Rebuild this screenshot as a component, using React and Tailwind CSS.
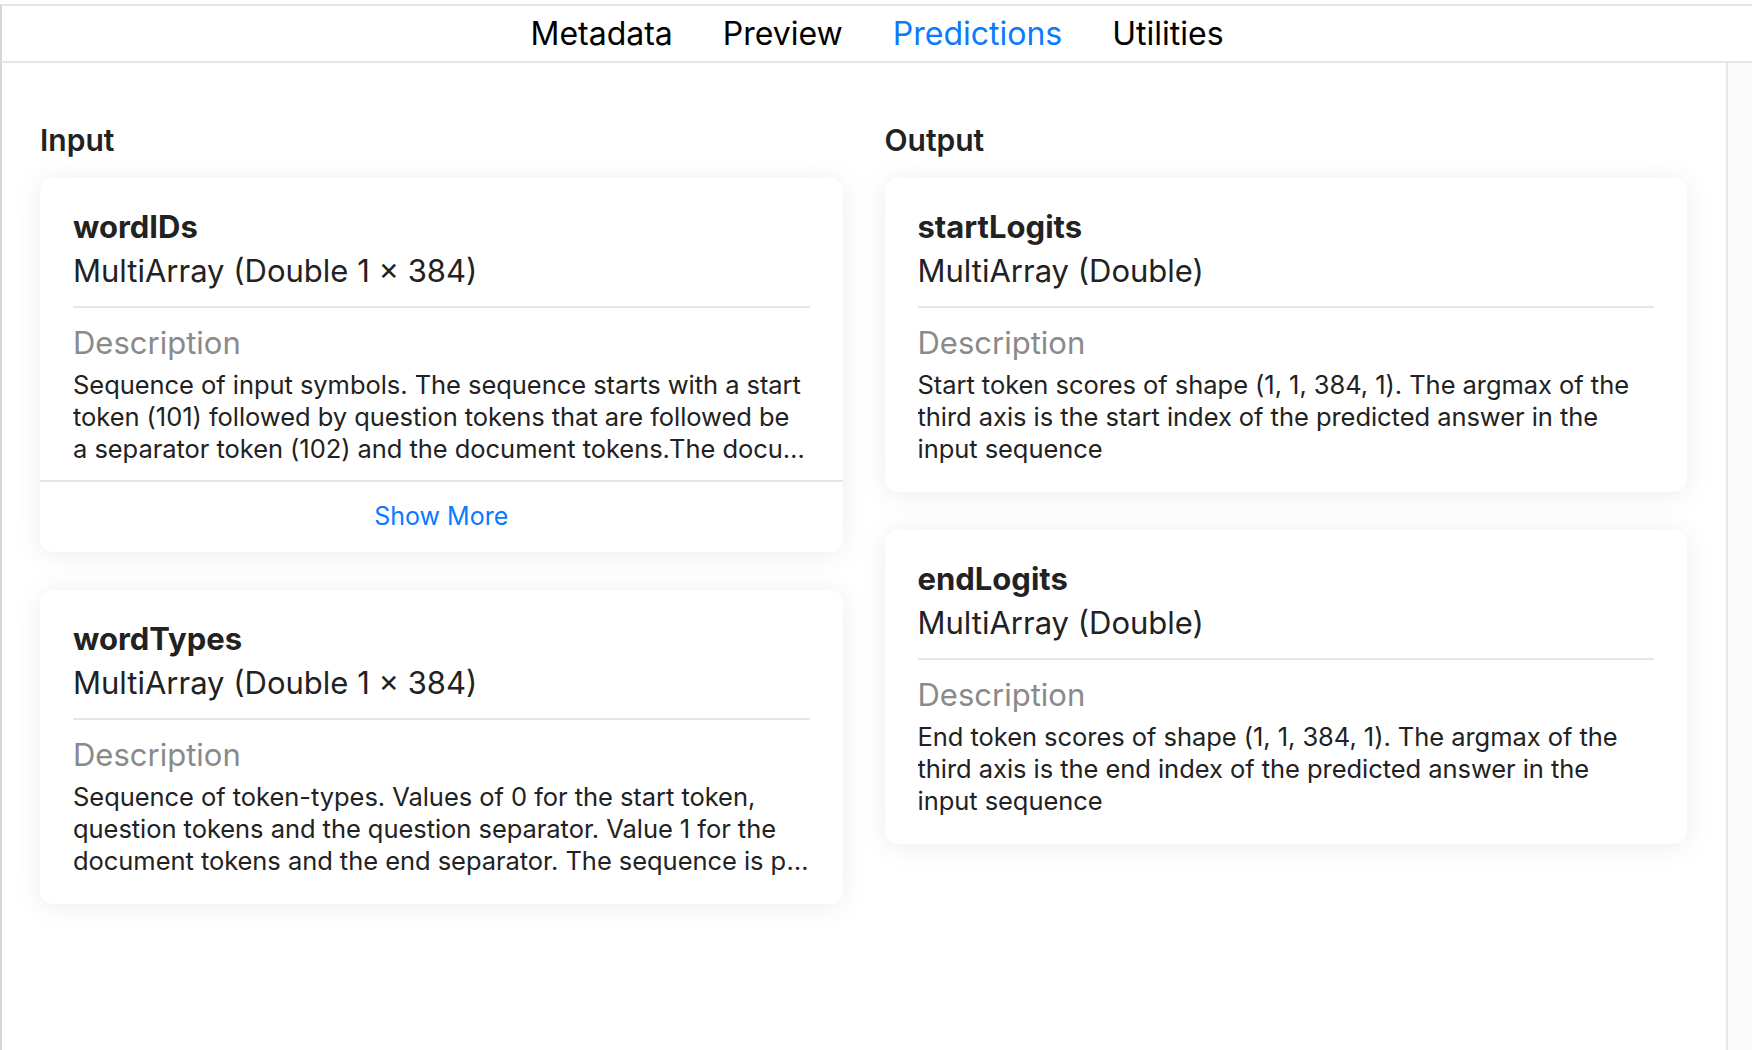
const tabs = ["Metadata", "Preview", "Predictions", "Utilities"];

const inputs = [
  {
    name: "wordIDs",
    type: "MultiArray (Double 1 × 384)",
    lines: [
      "Sequence of input symbols. The sequence starts with a start",
      "token (101) followed by question tokens that are followed be",
      "a separator token (102) and the document tokens.The document tokens end with a separator token (102). The sequence is padded with 0 values to length 384.",
    ],
    more: true,
  },
  {
    name: "wordTypes",
    type: "MultiArray (Double 1 × 384)",
    lines: [
      "Sequence of token-types. Values of 0 for the start token,",
      "question tokens and the question separator. Value 1 for the",
      "document tokens and the end separator. The sequence is padded with 0 values to length 384.",
    ],
  },
];

const outputs = [
  {
    name: "startLogits",
    type: "MultiArray (Double)",
    lines: [
      "Start token scores of shape (1, 1, 384, 1). The argmax of the",
      "third axis is the start index of the predicted answer in the",
      "input sequence",
    ],
  },
  {
    name: "endLogits",
    type: "MultiArray (Double)",
    lines: [
      "End token scores of shape (1, 1, 384, 1). The argmax of the",
      "third axis is the end index of the predicted answer in the",
      "input sequence",
    ],
  },
];

function FeatureCard({ item }) {
  return (
    <div className="rounded-[14px] bg-white shadow-[0_2px_28px_rgba(0,0,0,0.08)]">
      <div className={`px-[33px] pt-[32px] ${item.more ? "pb-[15px]" : "pb-[27px]"}`}>
        <h3 className="text-[31px] font-bold leading-[34px] text-[#222]">{item.name}</h3>
        <p className="mt-[9px] text-[31px] leading-[36px] text-[#222]">{item.type}</p>
        <div className="mt-[17px] h-[2px] bg-[#e6e6e6]" />
        <p className="mt-[17px] text-[31px] leading-[36px] text-[#8a8a8a]">Description</p>
        <div className="mt-[8px] text-[25.5px] leading-[32px] tracking-[-0.05px] text-[#222]">
          {item.lines.map((line, i) => (
            <p key={i} className="truncate">{line}</p>
          ))}
        </div>
      </div>
      {item.more && (
        <div className="flex h-[72px] items-center justify-center border-t-2 border-[#e6e6e6]">
          <button className="text-[25px] text-[#0a7aff]">Show More</button>
        </div>
      )}
    </div>
  );
}

function Column({ title, items }) {
  return (
    <section>
      <h2 className="text-[30px] font-semibold leading-[34px] text-[#222]">{title}</h2>
      <div className="mt-[21px] flex flex-col gap-[38px]">
        {items.map((item) => (
          <FeatureCard key={item.name} item={item} />
        ))}
      </div>
    </section>
  );
}

export default function App() {
  return (
    <div className="flex h-[1050px] flex-col bg-white pt-[4px] font-['Inter',sans-serif] antialiased">
      <nav className="flex h-[59px] shrink-0 items-center justify-center gap-[50px] border-y-2 border-l-2 border-y-[#e5e5e5] border-l-[#d6d6d6]">
        {tabs.map((t) => (
          <span key={t} className={`text-[32px] leading-[41px] ${t === "Predictions" ? "text-[#0a7aff]" : "text-black"}`}>
            {t}
          </span>
        ))}
      </nav>
      <div className="flex flex-1">
        <main className="grid flex-1 grid-cols-2 items-start gap-x-[42px] border-l-2 border-[#d6d6d6] pl-[38px] pr-[39px] pt-[60px]">
          <Column title="Input" items={inputs} />
          <Column title="Output" items={outputs} />
        </main>
        <div className="w-[26px] border-l-2 border-[#e8e8e8] bg-[#fafafa]" />
      </div>
    </div>
  );
}
